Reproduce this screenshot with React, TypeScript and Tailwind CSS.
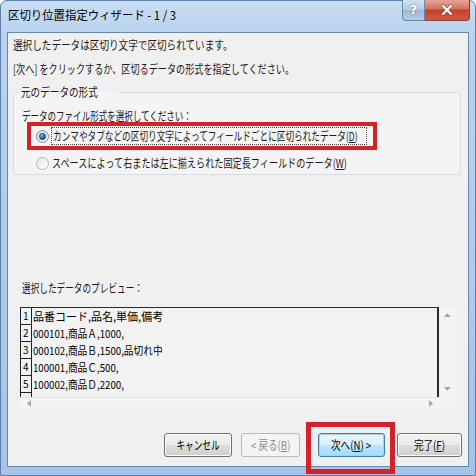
import React from "react";

const JP = "font-['Noto_Sans_CJK_JP','Noto_Sans',sans-serif]";

function Radio({ checked }: { checked: boolean }) {
  return (
    <svg width="13" height="13" viewBox="0 0 13 13" className="shrink-0">
      <defs>
        <linearGradient id={checked ? "rbg1" : "rbg0"} x1="0" y1="0" x2="1" y2="1">
          <stop offset="0" stopColor={checked ? "#d9d9d9" : "#e4e4e4"} />
          <stop offset="1" stopColor="#ffffff" />
        </linearGradient>
        <radialGradient id="rdot" cx="0.4" cy="0.35" r="0.7">
          <stop offset="0" stopColor="#8fc0e6" />
          <stop offset="0.5" stopColor="#2d6ea8" />
          <stop offset="1" stopColor="#163e66" />
        </radialGradient>
      </defs>
      <circle cx="6.5" cy="6.5" r="6" fill={`url(#${checked ? "rbg1" : "rbg0"})`} stroke={checked ? "#8a8a8a" : "#b8b8b8"} strokeWidth="1" />
      {checked && <circle cx="6.5" cy="6.5" r="3.2" fill="url(#rdot)" stroke="#1b4a75" strokeWidth="0.5" />}
    </svg>
  );
}

function Btn({
  children,
  kind = "normal",
  w,
}: {
  children: React.ReactNode;
  kind?: "normal" | "default" | "disabled";
  w: string;
}) {
  const base =
    "h-[24px] flex items-center justify-center rounded-[3px] border text-[12px] leading-none " + w;
  if (kind === "disabled")
    return (
      <div className={base + " border-[#b8bcbf] bg-[#f4f4f4] text-[#8d8d8d]"}>{children}</div>
    );
  if (kind === "default")
    return (
      <div
        className={
          base +
          " border-[#3c7fb1] bg-[linear-gradient(180deg,#eaf6fd_0%,#d9f0fc_50%,#bee6fd_50%,#a7d9f5_100%)] text-black shadow-[inset_0_0_0_1px_#9fd3f2]"
        }
      >
        {children}
      </div>
    );
  return (
    <div
      className={
        base +
        " border-[#707070] bg-[linear-gradient(180deg,#f2f2f2_0%,#ebebeb_50%,#dddddd_50%,#cfcfcf_100%)] text-black shadow-[inset_0_0_0_1px_#fcfcfc]"
      }
    >
      {children}
    </div>
  );
}

const rows = [
  "品番コード,品名,単価,備考",
  "000101,商品Ａ,1000,",
  "000102,商品Ｂ,1500,品切れ中",
  "100001,商品Ｃ,500,",
  "100002,商品Ｄ,2200,",
];

export default function App() {
  return (
    <div className={"relative w-[476px] h-[476px] overflow-hidden bg-white " + JP}>
      <div className="w-[476px] h-[476px] flex flex-col rounded-t-[7px] border border-[#5d7ea6] bg-[linear-gradient(180deg,#c9def3_0px,#b9d2ee_32px,#a6c4e7_100%)] px-[6px] pb-[8px]">
        {/* title bar */}
        <div className="h-[31px] flex items-start shrink-0">
          <div className="mt-[6px] ml-[1px] h-[16px] leading-[16px] text-[12px] text-black">
            <span className="inline-block origin-left scale-x-[0.95] whitespace-nowrap">
              区切り位置指定ウィザード - 1 / 3
            </span>
          </div>
          <div className="flex-1" />
          <div className="-mt-[1px] -mr-[1px] flex h-[21px]">
            <div className="w-[23px] h-[21px] rounded-bl-[4px] border border-[#6d87a6] border-t-0 bg-[linear-gradient(180deg,#d2e1f0_0%,#b6cbe1_50%,#9fb9d5_50%,#b3cbe3_100%)] flex items-center justify-center text-white text-[13px] font-bold font-['DejaVu_Sans',sans-serif] [text-shadow:0_0_2px_#43607f]">
              ?
            </div>
            <div className="w-[45px] h-[21px] rounded-br-[4px] border border-[#8c3a3a] border-t-0 border-l-0 bg-[linear-gradient(180deg,#e8a493_0%,#d6715f_45%,#c2412d_50%,#cf5a43_100%)] flex items-center justify-center">
              <svg width="14" height="12" viewBox="0 0 14 12">
                <path d="M3 2 L11 10 M11 2 L3 10" stroke="#5a1c14" strokeWidth="3.6" strokeLinecap="round" opacity="0.45" />
                <path d="M3 2 L11 10 M11 2 L3 10" stroke="#ffffff" strokeWidth="2.4" strokeLinecap="round" />
              </svg>
            </div>
          </div>
        </div>

        {/* client */}
        <div className="flex-1 flex flex-col border border-[#6787ad] bg-[#f0f0f0] text-[12px] text-[#1a1a1a]">
          <div className="mt-[4px] ml-[5px] h-[16px] leading-[16px]">
            <span className="inline-block origin-left scale-x-[0.8] whitespace-nowrap">
              選択したデータは区切り文字で区切られています。
            </span>
          </div>
          <div className="mt-[8px] ml-[5px] h-[16px] leading-[16px]">
            <span className="inline-block origin-left scale-x-[0.76] whitespace-nowrap">
              [次へ] をクリックするか、区切るデータの形式を指定してください。
            </span>
          </div>

          <fieldset className="mt-[7px] ml-[5px] w-[448px] rounded-[3px] border border-[#d5dfe5] bg-[#f4f4f4] pl-[8px] pb-[3px]">
            <legend className="-ml-[2px] h-[16px] leading-[16px] px-[1px]">
              <span className="inline-block origin-left scale-x-[0.8] whitespace-nowrap">元のデータの形式</span>
            </legend>
            <div className="mt-[10px] h-[12px] leading-[12px]">
              <span className="inline-block origin-left scale-x-[0.71] whitespace-nowrap">
                データのファイル形式を選択してください：
              </span>
            </div>
            <div className="ml-[5px] w-[350px] h-[28px] border-4 border-[#d3222a] flex items-center pl-[5px]">
              <Radio checked />
              <div className="ml-[2px] h-[18px] flex items-center px-[1px] border border-dotted border-[#444] w-[316px] shrink-0">
                <span className="inline-block origin-left scale-x-[0.72] whitespace-nowrap leading-[16px]">
                  カンマやタブなどの区切り文字によってフィールドごとに区切られたデータ(<span className="underline">D</span>)
                </span>
              </div>
            </div>
            <div className="mt-[5px] ml-[14px] h-[16px] flex items-center">
              <Radio checked={false} />
              <div className="ml-[3px] leading-[16px]">
                <span className="inline-block origin-left scale-x-[0.76] whitespace-nowrap">
                  スペースによって右または左に揃えられた固定長フィールドのデータ(<span className="underline">W</span>)
                </span>
              </div>
            </div>
          </fieldset>

          <div className="mt-[105px] ml-[14px] h-[16px] leading-[16px]">
            <span className="inline-block origin-left scale-x-[0.72] whitespace-nowrap">
              選択したデータのプレビュー：
            </span>
          </div>

          {/* preview */}
          <div className="mt-[11px] ml-[12px] w-[436px] h-[102px] flex flex-col bg-[#f2f2f2]">
            <div className="flex h-[90px]">
              <div className="w-[419px] h-[90px] border-t border-r-2 border-[#2a2a2a] flex">
                <div className="w-[12px] border-l border-r border-[#222] flex flex-col">
                  {[1, 2, 3, 4, 5].map((n) => (
                    <div
                      key={n}
                      className="h-[17px] border-b border-[#222] text-[10px] leading-[16px] pl-[2px] text-black"
                    >
                      {n}
                    </div>
                  ))}
                </div>
                <div className="flex flex-col pl-[1px] text-[11px] text-black">
                  {rows.map((r, i) => (
                    <div key={i} className="h-[17px] leading-[17px] whitespace-nowrap">
                      <span className={"inline-block origin-left whitespace-nowrap " + (i === 0 ? "" : "scale-x-[0.88]")}>{r}</span>
                    </div>
                  ))}
                </div>
              </div>
              <div className="flex-1 flex flex-col items-center justify-between py-[6px] bg-[#f4f4f4]">
                <svg width="7" height="4" viewBox="0 0 7 4">
                  <path d="M0 4 L3.5 0 L7 4 Z" fill="#a8a8a8" />
                </svg>
                <svg width="7" height="4" viewBox="0 0 7 4">
                  <path d="M0 0 L3.5 4 L7 0 Z" fill="#a8a8a8" />
                </svg>
              </div>
            </div>
            <div className="h-[12px] w-[420px] flex items-center justify-between px-[7px] bg-[#f4f4f4] border-t border-[#e4e4e4]">
              <svg width="4" height="7" viewBox="0 0 4 7">
                <path d="M4 0 L0 3.5 L4 7 Z" fill="#a8a8a8" />
              </svg>
              <svg width="4" height="7" viewBox="0 0 4 7">
                <path d="M0 0 L4 3.5 L0 7 Z" fill="#a8a8a8" />
              </svg>
            </div>
          </div>

          {/* buttons */}
          <div className="mt-[24px] flex">
            <div className="ml-[156px]">
              <Btn w="w-[68px]">
                <span className="inline-block scale-x-[0.72] whitespace-nowrap">キャンセル</span>
              </Btn>
            </div>
            <div className="ml-[9px]">
              <Btn w="w-[59px]" kind="disabled">
                <span className="inline-block scale-x-[0.8] whitespace-nowrap">
                  &lt; 戻る(<span className="underline">B</span>)
                </span>
              </Btn>
            </div>
            <div className="ml-[18px]">
              <Btn w="w-[67px]" kind="default">
                <span className="inline-block scale-x-[0.8] whitespace-nowrap">
                  次へ(<span className="underline">N</span>) &gt;
                </span>
              </Btn>
            </div>
            <div className="ml-[12px]">
              <Btn w="w-[65px]">
                <span className="inline-block scale-x-[0.8] whitespace-nowrap">
                  完了(<span className="underline">F</span>)
                </span>
              </Btn>
            </div>
          </div>
        </div>
      </div>

      {/* annotation: red box around Next */}
      <div className="absolute left-[306px] top-[422px] w-[89px] h-[52px] border-[5px] border-[#d3222a] pointer-events-none" />
    </div>
  );
}
